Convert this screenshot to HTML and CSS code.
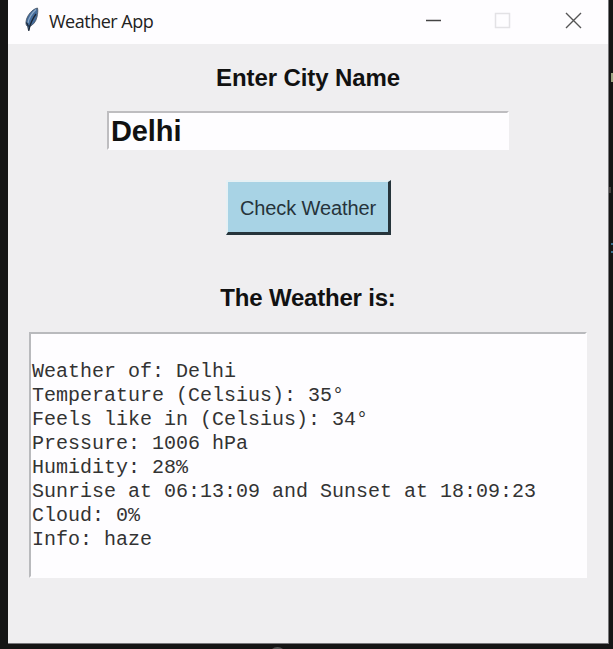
FILE: index.html
```html
<!DOCTYPE html>
<html lang="en">
<head>
<meta charset="utf-8">
<title>Weather App</title>
<link rel="stylesheet" href="styles.css">
</head>
<body>
<div class="window">
  <header class="titlebar">
    <svg class="feather" width="16" height="26" viewBox="0 0 16 26">
      <path d="M13.500 1C8.500 2 3 8 2 14.500c-.3 2.200.2 4.200 1.500 5L4.700 24l1-4.500c3.500-1.500 6.300-5 7.300-9.500.6-3.200 1.200-6.500.5-9z" fill="#446c9c" stroke="#465260" stroke-width=".8"/>
      <path d="M12 2.500C8 6 5 10 4 16" fill="none" stroke="#8da9c6" stroke-width="1.300"/>
      <path d="M12 7C9 11 6.500 15 4.700 23.500M2.500 15.500l2 4" fill="none" stroke="#1b2635" stroke-width="1.300"/>
    </svg>
    <h1 class="title">Weather App</h1>
    <svg class="controls" width="160" height="18" viewBox="0 0 160 18">
      <path d="M3 9.500h15" stroke="#444" stroke-width="1.500"/>
      <rect x="72.500" y="2.500" width="14" height="14" fill="none" stroke="#e3e2e5" stroke-width="1.500"/>
      <path d="M143 2l15 15M158 2l-15 15" stroke="#555" stroke-width="1.400"/>
    </svg>
  </header>
  <main class="content">
    <label class="heading" for="city">Enter City Name</label>
    <input class="city" id="city" type="text" value="Delhi">
    <button class="check" type="button">Check Weather</button>
    <h2 class="heading result-heading">The Weather is:</h2>
    <pre class="report">

Weather of: Delhi
Temperature (Celsius): 35°
Feels like in (Celsius): 34°
Pressure: 1006 hPa
Humidity: 28%
Sunrise at 06:13:09 and Sunset at 18:09:23
Cloud: 0%
Info: haze</pre>
  </main>
</div>
<i class="speck speck-pale"></i>
<i class="speck speck-dim"></i>
<i class="speck speck-blue"></i>
<i class="knob"></i>
</body>
</html>
```
FILE: styles.css
```css
* { box-sizing: border-box; }

body {
  position: relative;
  height: 649px;
  margin: 0;
  padding-left: 8px;
  overflow: hidden;
  background: #151515;
  font-family: "Liberation Sans", Arial, sans-serif;
  color: #111;
}

.window {
  display: flex;
  flex-direction: column;
  width: 601px;
  height: 644px;
  background: #efeef0;
  border-right: 1px solid #77777a;
  border-bottom: 1px solid #77777a;
}

.titlebar {
  display: flex;
  align-items: center;
  height: 44px;
  padding: 0 25px 4px 16px;
  background: #fefdff;
}

.feather { flex: none; }

.title {
  margin: 1px 0 0 9px;
  font: 400 18px/24px "Open Sans", "Noto Sans", sans-serif;
  letter-spacing: -0.5px;
  color: #222;
}

.controls { margin-left: auto; }

.content {
  display: flex;
  flex-direction: column;
  align-items: center;
  padding-top: 20px;
}

.heading {
  margin: 0;
  font-size: 24px;
  font-weight: 700;
  line-height: 28px;
  letter-spacing: -0.1px;
  white-space: nowrap;
}

.city {
  width: 402px;
  height: 39px;
  margin-top: 19px;
  padding: 1px 0 0 2px;
  border: 2px solid;
  border-color: #bebdc0 #fefdff #fefdff #bebdc0;
  background: #fefdff;
  color: #111;
  font: 700 29px/34px "Liberation Sans", Arial, sans-serif;
  letter-spacing: -0.1px;
  outline: 0;
}

.check {
  width: 165px;
  height: 55px;
  margin-top: 30px;
  padding: 2px 0 0 1px;
  border: solid;
  border-width: 2px 3px 3px 2px;
  border-color: #e6f0f4 #26343b #26343b #e6f0f4;
  background: #a8d3e5;
  color: #26333b;
  font: 400 20px/24px "Liberation Sans", Arial, sans-serif;
  letter-spacing: -0.12px;
}

.result-heading {
  margin-top: 49px;
  letter-spacing: -0.2px;
}

.report {
  width: 558px;
  height: 246px;
  margin: 20px 0 0;
  padding: 2px 0 0 1px;
  border: 2px solid;
  border-color: #b9babd #fefdff #fefdff #b9babd;
  background: #fefdff;
  color: #333;
  font: 400 20px/24px "Liberation Mono", "Courier New", monospace;
}

.speck {
  position: absolute;
  right: 0;
  width: 2px;
}
.speck-pale { top: 73px; height: 9px; background: #9da583; }
.speck-dim { top: 187px; right: 2px; height: 6px; background: #45403e; }
.speck-blue { top: 243px; height: 10px; border: solid #3c718f; border-width: 2px 0; }

.knob {
  position: absolute;
  left: 269px;
  top: 647px;
  width: 17px;
  height: 17px;
  border-radius: 50%;
  background: #555;
}
```
